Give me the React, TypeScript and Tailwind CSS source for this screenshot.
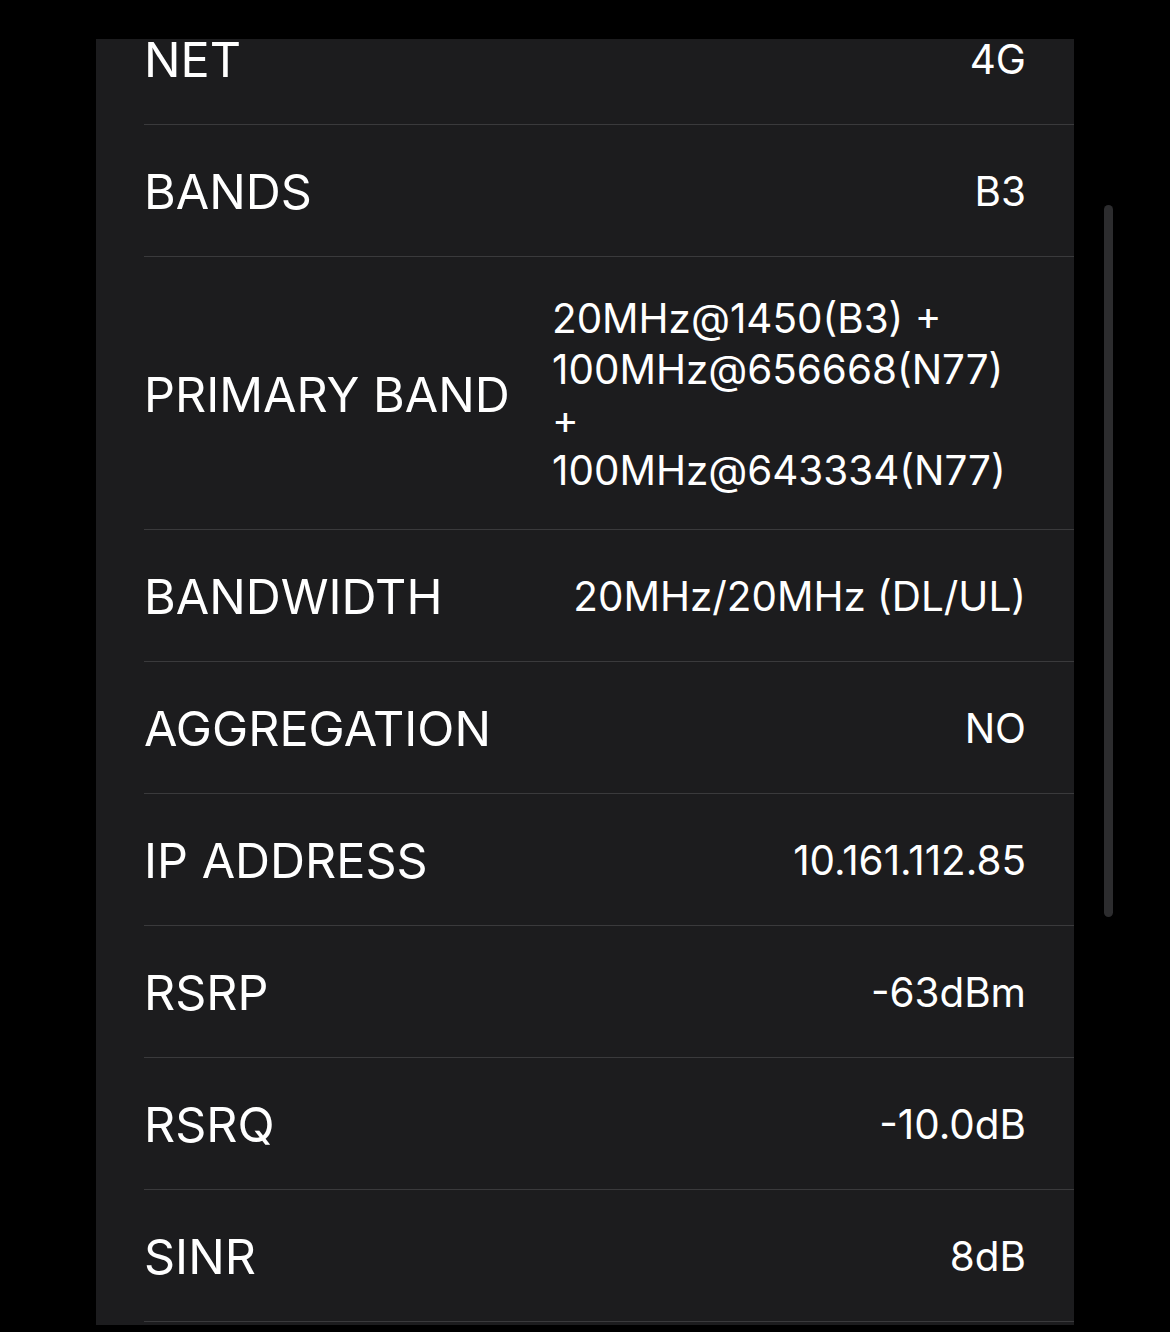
import React from "react";

const rows: { label: string; value: string; multi?: boolean }[] = [
  { label: "NET", value: "4G" },
  { label: "BANDS", value: "B3" },
  {
    label: "PRIMARY BAND",
    value: "20MHz@1450(B3) + 100MHz@656668(N77) + 100MHz@643334(N77)",
    multi: true,
  },
  { label: "BANDWIDTH", value: "20MHz/20MHz (DL/UL)" },
  { label: "AGGREGATION", value: "NO" },
  { label: "IP ADDRESS", value: "10.161.112.85" },
  { label: "RSRP", value: "-63dBm" },
  { label: "RSRQ", value: "-10.0dB" },
  { label: "SINR", value: "8dB" },
];

export default function App() {
  return (
    <div
      className="relative w-[1170px] h-[1332px] bg-black overflow-hidden text-white"
      style={{ fontFamily: "Inter, 'Noto Sans', sans-serif" }}
    >
      <div className="ml-[96px] mt-[39px] w-[978px] h-[1286px] bg-[#1c1c1e] overflow-hidden">
        <div className="-mt-[46px] pl-[48px]">
          {rows.map((r) => (
            <div
              key={r.label}
              className={`flex items-center justify-between border-b border-[#3a3a3c] pt-[4px] pr-[48px] ${
                r.multi ? "h-[273px]" : "h-[132px]"
              }`}
            >
              <div className="text-[48.5px] leading-none whitespace-nowrap">
                {r.label}
              </div>
              {r.multi ? (
                <div className="w-[474px] text-left text-[40.4px] leading-[50.5px]">
                  {r.value}
                </div>
              ) : (
                <div className="text-[40.4px] leading-none text-right whitespace-nowrap">
                  {r.value}
                </div>
              )}
            </div>
          ))}
        </div>
      </div>
      <div className="absolute left-[1104px] top-[205px] w-[9px] h-[712px] rounded-full bg-[#2c2c2e]" />
    </div>
  );
}
